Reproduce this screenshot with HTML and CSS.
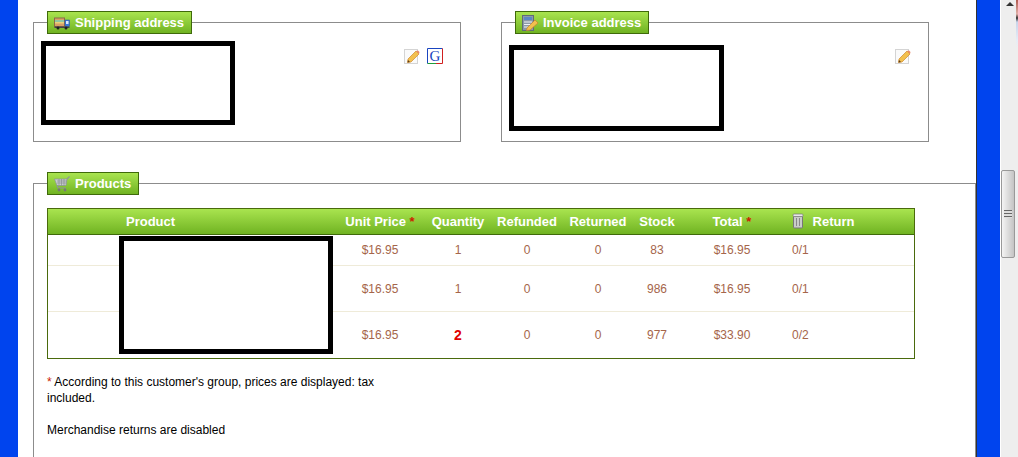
FILE: index.html
```html
<!DOCTYPE html>
<html lang="en">
<head>
    <meta charset="UTF-8">
    <title>Order details</title>
    <link rel="stylesheet" href="styles.css">
</head>
<body>
    <div class="page">
        <div class="content">
            <!-- Addresses -->
            <div class="addresses">
                <fieldset class="box address">
                    <legend class="box-title">
                        <svg class="icon" viewBox="0 0 16 16">
                            <rect x="0.5" y="3" width="10" height="8.5" fill="#d9a066" stroke="#8a6a4a"/>
                            <rect x="1" y="5" width="9" height="2" fill="#8fc7a0"/>
                            <rect x="1" y="7" width="9" height="1.5" fill="#e8d27a"/>
                            <rect x="11" y="5" width="4.5" height="6.5" fill="#3b78d8" stroke="#274f9a" stroke-width="0.5"/>
                            <rect x="12" y="6" width="2.5" height="3" fill="#dbe9fb"/>
                            <rect x="0.5" y="11.5" width="15" height="1.5" fill="#444"/>
                            <circle cx="4" cy="13" r="1.5" fill="#222"/>
                            <circle cx="12" cy="13" r="1.5" fill="#222"/>
                        </svg>
                        Shipping address
                    </legend>
                    <div class="address-body">
                        <div class="redacted redacted-ship"></div>
                        <div class="actions">
                            <svg class="icon-action" viewBox="0 0 16 16">
                                <rect x="0.5" y="1.5" width="13" height="14" fill="#fafafa" stroke="#d4d4d4"/>
                                <path d="M4 11 L12 3 L15 6 L7 14 L3.5 14.5 Z" fill="#f2c04e" stroke="#d08a2e" stroke-width="0.7"/>
                                <path d="M12 3 L15 6 L15.5 4 L14 2.5 Z" fill="#e8896a"/>
                                <path d="M3.5 14.5 L4 12 L6 14 Z" fill="#5a3a1a"/>
                            </svg>
                            <svg class="icon-action" viewBox="0 0 16 16">
                                <rect x="0.5" y="0.5" width="15" height="15" fill="#fff"/>
                                <path d="M0.5 15.5 V0.5 H15.5" fill="none" stroke="#1a45c0"/>
                                <path d="M0.5 15.5 H9" fill="none" stroke="#1f9e3a"/>
                                <path d="M9 15.5 H15.5 V0.5" fill="none" stroke="#d02020"/>
                                <text class="g-letter" x="8" y="13" text-anchor="middle">G</text>
                            </svg>
                        </div>
                    </div>
                </fieldset>

                <fieldset class="box address">
                    <legend class="box-title">
                        <svg class="icon" viewBox="0 0 16 16">
                            <rect x="0.5" y="0.5" width="11" height="15" fill="#8c9aa8" stroke="#5f6b78"/>
                            <rect x="2" y="2" width="8" height="3" fill="#5d86c4"/>
                            <path d="M2 7 h8 M2 9.5 h8 M2 12 h8" stroke="#eef1f4" stroke-width="1.2"/>
                            <path d="M5 13 L13 5 L16 8 L8 15 L4.5 15.5 Z" fill="#f2c04e" stroke="#c9822a" stroke-width="0.7"/>
                        </svg>
                        Invoice address
                    </legend>
                    <div class="address-body">
                        <div class="redacted redacted-invoice"></div>
                        <div class="actions">
                            <svg class="icon-action" viewBox="0 0 16 16">
                                <rect x="0.5" y="1.5" width="13" height="14" fill="#fafafa" stroke="#d4d4d4"/>
                                <path d="M4 11 L12 3 L15 6 L7 14 L3.5 14.5 Z" fill="#f2c04e" stroke="#d08a2e" stroke-width="0.7"/>
                                <path d="M12 3 L15 6 L15.5 4 L14 2.5 Z" fill="#e8896a"/>
                                <path d="M3.5 14.5 L4 12 L6 14 Z" fill="#5a3a1a"/>
                            </svg>
                        </div>
                    </div>
                </fieldset>
            </div>

            <!-- Products -->
            <fieldset class="box products">
                <legend class="box-title">
                    <svg class="icon" viewBox="0 0 16 16">
                        <path d="M0.5 3 H13 L12 9.5 H3 Z" fill="#c8ccd0" stroke="#8d9399" stroke-width="0.7"/>
                        <path d="M3 5 H13 M3 7 H12.5 M5 3 V9.5 M7.5 3 V9.5 M10 3 V9.5" stroke="#7f868c" stroke-width="0.6"/>
                        <path d="M13 3 L15.5 0.5 M3 9.5 L4 12 H12" fill="none" stroke="#8d9399" stroke-width="1.2"/>
                        <circle cx="5" cy="14" r="1.4" fill="#777"/>
                        <circle cx="11" cy="14" r="1.4" fill="#777"/>
                    </svg>
                    Products
                </legend>
                <div class="table-wrap">
                    <table class="order-table">
                        <colgroup>
                            <col class="col-image">
                            <col class="col-product">
                            <col class="col-price">
                            <col class="col-qty">
                            <col class="col-refunded">
                            <col class="col-returned">
                            <col class="col-stock">
                            <col class="col-total">
                            <col class="col-return">
                        </colgroup>
                        <thead>
                            <tr>
                                <th></th>
                                <th class="left product-head">Product</th>
                                <th>Unit Price <span class="star">*</span></th>
                                <th>Quantity</th>
                                <th>Refunded</th>
                                <th>Returned</th>
                                <th>Stock</th>
                                <th>Total <span class="star">*</span></th>
                                <th class="left return-head">
                                    <svg class="icon-trash" viewBox="0 0 12 16">
                                        <rect x="1.5" y="3" width="9" height="12" rx="1" fill="#c9ccc9" stroke="#777"/>
                                        <rect x="1" y="1" width="10" height="2.5" rx="1" fill="#e8e8e8" stroke="#777" stroke-width="0.7"/>
                                        <path d="M4.5 5 V13 M7.5 5 V13" stroke="#888"/>
                                    </svg>
                                    Return
                                </th>
                            </tr>
                        </thead>
                        <tbody>
                            <tr class="row-first">
                                <td></td><td></td>
                                <td>$16.95</td><td>1</td><td>0</td><td>0</td><td>83</td><td>$16.95</td>
                                <td class="left return-cell">0/1</td>
                            </tr>
                            <tr class="row-tall">
                                <td></td><td></td>
                                <td>$16.95</td><td>1</td><td>0</td><td>0</td><td>986</td><td>$16.95</td>
                                <td class="left return-cell">0/1</td>
                            </tr>
                            <tr class="row-tall row-last">
                                <td></td><td></td>
                                <td>$16.95</td><td class="qty-alert">2</td><td>0</td><td>0</td><td>977</td><td>$33.90</td>
                                <td class="left return-cell">0/2</td>
                            </tr>
                        </tbody>
                    </table>
                    <div class="redacted redacted-product"></div>
                </div>
                <p class="note"><span class="star">*</span> According to this customer's group, prices are displayed: tax included.</p>
                <p class="note returns-note">Merchandise returns are disabled</p>
            </fieldset>
        </div>

        <!-- Window scrollbar -->
        <div class="scrollbar">
            <div class="scroll-up"></div>
            <div class="scroll-thumb">
                <div class="grip"></div>
            </div>
            <div class="next-window"></div>
        </div>
    </div>
</body>
</html>
```

FILE: styles.css
```css
* {
    margin: 0;
    padding: 0;
    box-sizing: border-box;
}

html, body {
    height: 100%;
    overflow: hidden;
}

body {
    font-family: "Liberation Sans", Arial, sans-serif;
    font-size: 12px;
    line-height: 16px;
    color: #000;
    background: #fff;
}

.page {
    display: flex;
    height: 457px;
    padding-left: 18px;
    background: #0044ee;
}

.content {
    width: 959px;
    height: 457px;
    padding: 11px 0 0 15px;
    overflow: hidden;
    background: #fff;
    border-right: 1px solid #333;
}

/* Boxes */
.addresses {
    display: flex;
    gap: 40px;
}

.box {
    border: 1px solid #8c8c8c;
    padding: 0 17px 0 7px;
}

.box-title {
    display: flex;
    align-items: center;
    gap: 5px;
    height: 23px;
    margin-left: 6px;
    padding: 0 7px 0 6px;
    font-size: 13px;
    font-weight: bold;
    color: #fff;
    background: linear-gradient(to bottom, #a9e44f, #70b322);
    border: 1px solid #3f6a0a;
}

.icon {
    width: 16px;
    height: 16px;
}

.address {
    width: 428px;
    height: 131px;
}

.address-body {
    display: flex;
    justify-content: space-between;
    padding-top: 7px;
}

.actions {
    display: flex;
    gap: 7px;
    padding-top: 7px;
}

.icon-action {
    width: 16px;
    height: 16px;
}

.g-letter {
    font-family: "Liberation Serif", serif;
    font-size: 15px;
    fill: #1a45c0;
}

.redacted {
    background: #fff;
    border: 5px solid #000;
}

.redacted-ship {
    width: 194px;
    height: 84px;
}

.redacted-invoice {
    width: 215px;
    height: 86px;
    margin-top: 4px;
}

/* Products */
.products {
    height: 360px;
    margin-top: 30px;
}

.table-wrap {
    position: relative;
    margin: 13px 0 0 6px;
    width: 868px;
}

.order-table {
    width: 868px;
    table-layout: fixed;
    border-collapse: separate;
    border-spacing: 0;
    border: 1px solid #4a6a0c;
}

.col-image { width: 72px; }
.col-product { width: 216px; }
.col-price { width: 88px; }
.col-qty { width: 68px; }
.col-refunded { width: 70px; }
.col-returned { width: 72px; }
.col-stock { width: 46px; }
.col-total { width: 104px; }
.col-return { width: 130px; }

.order-table th {
    height: 26px;
    font-size: 13px;
    font-weight: bold;
    color: #fff;
    text-align: center;
    white-space: nowrap;
    background: linear-gradient(to bottom, #a9e44f, #70b322);
    border-bottom: 1px solid #3f6a0a;
}

.order-table td {
    text-align: center;
    color: #a5654a;
    border-bottom: 1px solid #efebd9;
}

.order-table .left {
    text-align: left;
}

.product-head {
    padding-left: 6px;
}

.return-head {
    padding-left: 8px;
}

.return-cell {
    padding-left: 8px;
}

.icon-trash {
    width: 12px;
    height: 16px;
    margin-right: 5px;
    vertical-align: -3px;
}

.row-first td {
    height: 31px;
}

.row-tall td {
    height: 46px;
}

.row-last td {
    border-bottom: none;
}

.order-table .qty-alert {
    font-size: 14px;
    font-weight: bold;
    color: #e00000;
}

.star {
    color: #cc2200;
}

.redacted-product {
    position: absolute;
    left: 72px;
    top: 28px;
    width: 214px;
    height: 118px;
}

.note {
    width: 370px;
    margin: 15px 0 0 6px;
}

.returns-note {
    margin-top: 16px;
}

/* Scrollbar */
.scrollbar {
    position: relative;
    width: 18px;
    margin-left: 23px;
    padding-left: 1px;
    background: linear-gradient(to right, #fff 1px, #eeeeee 1px);
}

.scroll-up {
    width: 0;
    height: 0;
    margin: 2px 0 0 5px;
    border-left: 4px solid transparent;
    border-right: 4px solid transparent;
    border-bottom: 4px solid #333;
}

.scroll-thumb {
    display: flex;
    align-items: center;
    justify-content: center;
    width: 14px;
    height: 88px;
    margin-top: 164px;
    background: linear-gradient(to right, #f4f4f4, #c4c4c4);
    border: 1px solid #999;
    border-radius: 2px;
}

.grip {
    width: 8px;
    height: 8px;
    background: repeating-linear-gradient(to bottom, #666 0, #666 1px, #ddd 1px, #ddd 3px);
}

.next-window {
    position: absolute;
    right: 0;
    top: 0;
    width: 2px;
    height: 48px;
    background: linear-gradient(to bottom, #b05a50 0, #e0b0a8 14px, #333 18px, #c8d4ea 22px, #e6ecf6 40px, #eeeeee 48px);
}
```
